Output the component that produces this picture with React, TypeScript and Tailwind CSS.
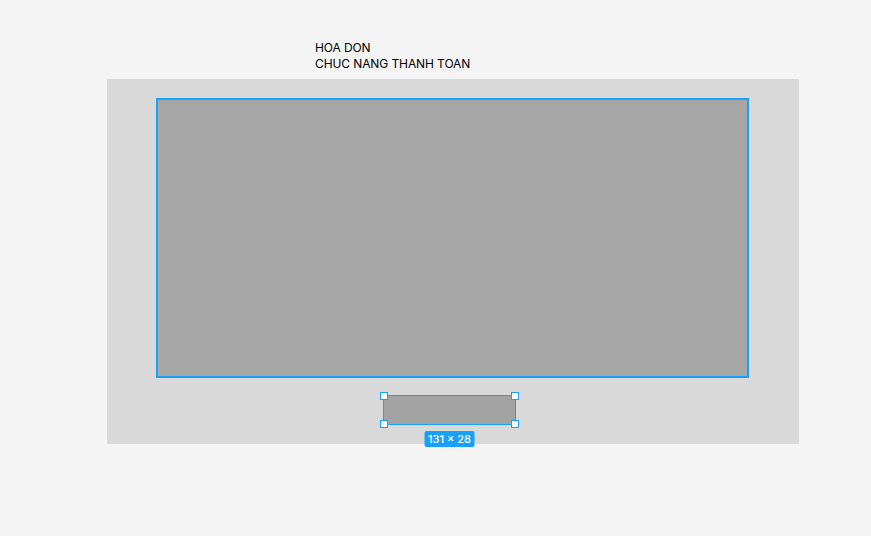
import React from "react";

function Handle({ className }: { className: string }) {
  return (
    <div
      className={
        "absolute w-[8px] h-[8px] bg-white border border-[#18a0fb] " + className
      }
    />
  );
}

export default function App() {
  return (
    <div
      className="w-[871px] h-[536px] bg-[#f4f4f4] pt-[40px] flex flex-col overflow-hidden"
      style={{ fontFamily: "Inter, 'Liberation Sans', sans-serif" }}
    >
      <div className="ml-[315px] text-[12px] leading-[16px] tracking-[-0.1px] text-black">
        <div>HOA DON</div>
        <div>CHUC NANG THANH TOAN</div>
      </div>
      <div className="mt-[7px] ml-[107px] w-[692px] h-[365px] bg-[#d9d9d9] pt-[19px] pl-[49px] flex flex-col gap-[17px]">
        <div className="w-[593px] h-[280px] border-2 border-[#18a0fb] bg-[#a6a6a6]" />
        <div className="relative ml-[227px] w-[133px] h-[30px] border border-[#18a0fb] bg-[#a3a3a3]">
          <Handle className="-left-[4px] -top-[4px]" />
          <Handle className="-right-[4px] -top-[4px]" />
          <Handle className="-left-[4px] -bottom-[4px]" />
          <Handle className="-right-[4px] -bottom-[4px]" />
          <div className="absolute left-1/2 -translate-x-1/2 top-[35px] h-[16px] px-[4px] rounded-[2px] bg-[#18a0fb] text-white text-[11px] font-medium leading-[16px] whitespace-nowrap">
            131 × 28
          </div>
        </div>
      </div>
    </div>
  );
}
